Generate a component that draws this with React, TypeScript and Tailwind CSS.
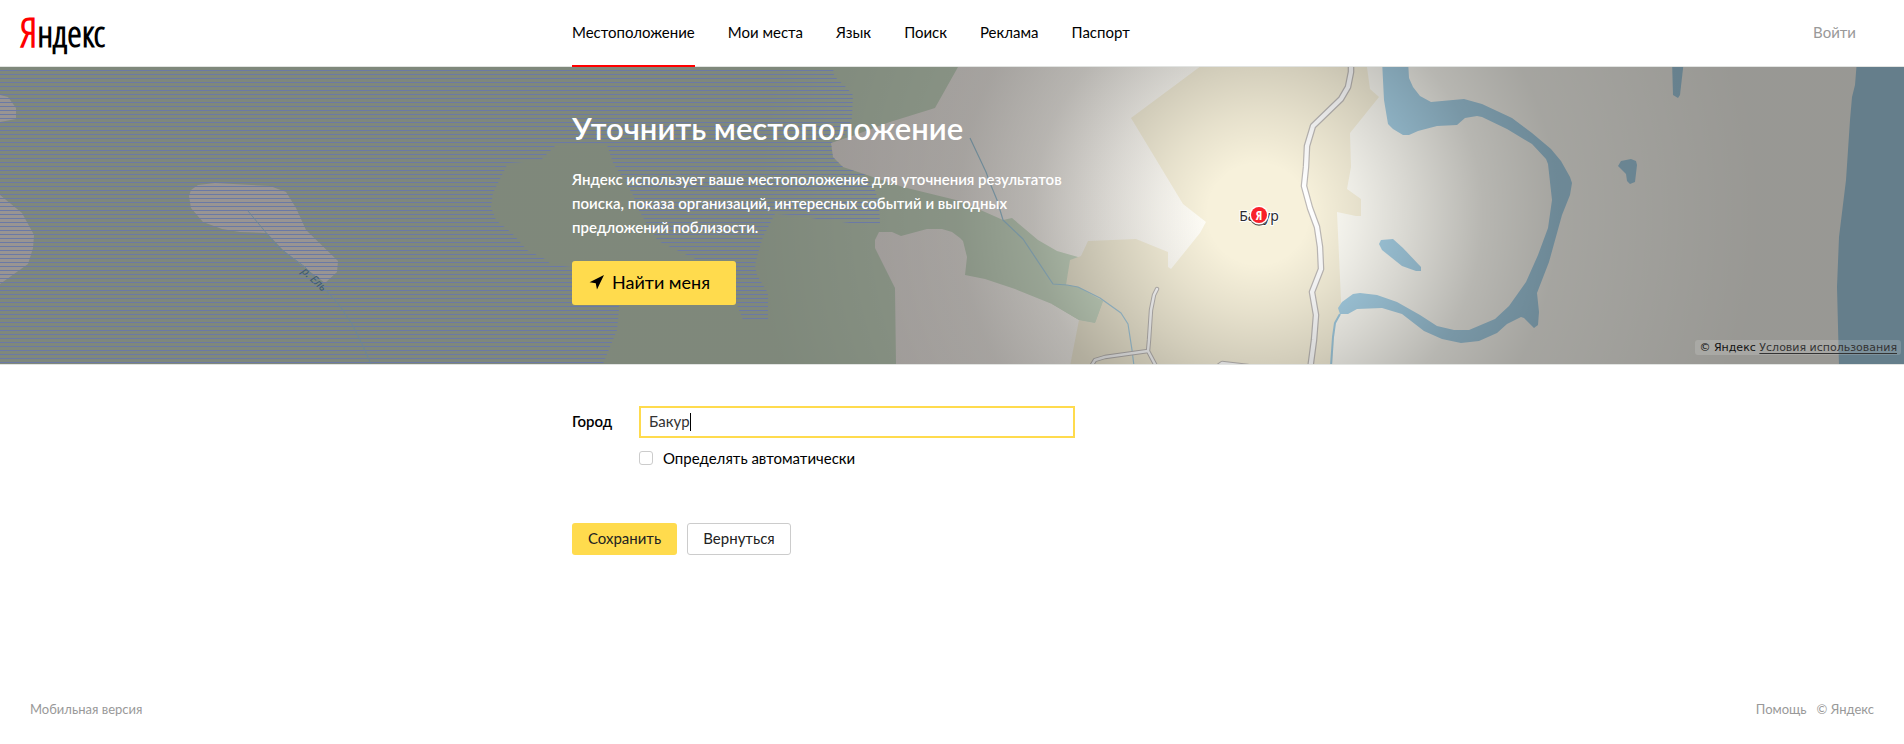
import React from "react";

const NAV = ["Местоположение", "Мои места", "Язык", "Поиск", "Реклама", "Паспорт"];

const MAIN_ROAD =
  "M1351 60 L1351 72 L1348 87 L1341 99 L1313 126 L1307 146 L1306 167 L1304 186 L1310 208 L1317 227 L1320 247 L1321 269 L1312 292 L1316 315 L1314 340 L1310 370";
const SIDE_ROAD = "M1157 289 L1154 295 L1151 310 L1149 340 L1148 351 L1105 357 L1095 360 L1090 368 M1148 351 L1157 368 M1215 368 L1222 363 L1248 366";
const STREAM =
  "M970 138 L986 172 L990 183 L997 200 L1003 220 L1023 239 L1053 284 L1067 285 L1078 287 L1100 298 L1121 313 L1128 324 L1132 350 L1134 366";

function MapView() {
  return (
    <svg
      className="absolute inset-0 h-full w-full"
      viewBox="0 67 1904 297"
      preserveAspectRatio="xMidYMin slice"
      role="img"
      aria-label="Карта: Бакур"
    >
      <defs>
        <pattern id="marsh" width="4" height="4" patternUnits="userSpaceOnUse">
          <rect x="0" y="2" width="4" height="1" fill="#6b79a6" />
        </pattern>
        <radialGradient id="shade" gradientUnits="userSpaceOnUse" cx="1258" cy="214" r="500">
          <stop offset="0" stopColor="#000" stopOpacity="0" />
          <stop offset="0.1" stopColor="#000" stopOpacity="0" />
          <stop offset="0.2" stopColor="#000" stopOpacity="0.07" />
          <stop offset="0.3" stopColor="#000" stopOpacity="0.15" />
          <stop offset="0.45" stopColor="#000" stopOpacity="0.28" />
          <stop offset="0.6" stopColor="#000" stopOpacity="0.35" />
          <stop offset="1" stopColor="#000" stopOpacity="0.4" />
        </radialGradient>
        <linearGradient id="land" gradientUnits="userSpaceOnUse" x1="800" y1="0" x2="1250" y2="0">
          <stop offset="0" stopColor="#fff8f4" />
          <stop offset="1" stopColor="#fefdf6" />
        </linearGradient>
      </defs>

      <rect x="0" y="67" width="1904" height="297" fill="url(#land)" />
      <path
        fill="#d3e3cd"
        d="M0 60 L962 60 L958 67 L935 108 L890 122 L855 135 L831 143 L833 157 L843 167 L903 187 L960 201 L985 212 L1003 220 L1012 218 L1038 240 L1057 251 L1078 257 L1110 300 L1095 323 L1079 320 L1052 304 L1015 289 L985 279 L965 275 L967 257 L963 241 L960 238 L952 232 L942 229 L927 229 L901 236 L892 232 L879 232 L875 240 L875 248 L895 288 L896 364 L0 364 Z"
      />
      <g fill="#fff8f4">
        <path d="M0 95 L8 97 L16 108 L16 119 L0 122 Z" />
        <path d="M0 195 L22 213 L34 235 L33 248 L28 264 L0 284 Z" />
        <path d="M198 185 L215 183 L270 186 L286 192 L296 208 L306 230 L338 261 L337 272 L325 283 L300 264 L283 250 L267 233 L240 232 L222 229 L203 222 L191 208 L189 196 L191 190 Z" />
      </g>
      <path
        fill="#f7f1db"
        d="M1209 60 L1131 118 L1183 204 L1206 222 L1200 233 L1171 269 L1168 267 L1168 252 L1136 239 L1088 241 L1081 256 L1070 260 L1066 285 L1103 301 L1095 323 L1079 320 L1070 366 L1332 366 L1335 323 L1341 310 L1341 300 L1337 212 L1356 216 L1361 216 L1361 199 L1347 189 L1351 167 L1350 133 L1379 97 L1370 89 L1366 60 Z"
      />
      <path
        fill="#d3e3cd"
        d="M1066 285 L1078 287 L1103 301 L1095 323 L1079 320 L1052 304 Z"
      />
      <g fill="#a8d2e7">
        <path d="M1382 60 L1384 100 L1388 124 L1393 129 L1403 135 L1409 135 L1418 131 L1437 126 L1457 125 L1465 118 L1477 116 L1482 117 L1507 129 L1532 144 L1546 159 L1548 164 L1552 200 L1548 228 L1538 255 L1526 282 L1509 306 L1495 319 L1469 330 L1454 330 L1437 326 L1420 315 L1397 302 L1377 295 L1360 293 L1353 294 L1342 302 L1338 308 L1340 314 L1348 314 L1357 309 L1382 308 L1402 314 L1424 331 L1442 339 L1461 343 L1479 341 L1497 333 L1507 324 L1521 317 L1524 318 L1534 328 L1538 325 L1539 312 L1537 293 L1549 262 L1562 215 L1570 195 L1572 183 L1570 177 L1561 161 L1551 149 L1532 133 L1512 118 L1482 104 L1464 99 L1431 102 L1420 96 L1413 87 L1409 78 L1408 60 Z" />
        <path d="M1379 244 L1381 240 L1393 239 L1403 248 L1421 267 L1421 271 L1416 271 L1402 266 L1382 250 Z" />
        <path d="M1672 60 L1673 95 L1678 98 L1680 95 L1684 60 Z" />
        <path d="M1618 166 L1621 161 L1631 159 L1636 161 L1637 165 L1635 182 L1630 184 L1627 181 L1626 174 Z" />
        <path d="M1857 60 L1855 85 L1852 97 L1850 120 L1846 180 L1839 237 L1837 287 L1839 366 L1904 366 L1904 60 Z" />
      </g>
      <g fill="none" strokeLinejoin="round">
        <path d="M1340 314 L1335 323 L1333 337 L1331 366" stroke="#a0cbe0" strokeWidth="2" />
        <path d={STREAM} stroke="#a8cfe2" strokeWidth="1.2" />
        <path d={SIDE_ROAD} stroke="#bdb9b6" strokeWidth="4.4" strokeLinecap="round" />
        <path d={SIDE_ROAD} stroke="#fff" strokeWidth="2.4" strokeLinecap="round" />
        <path d={MAIN_ROAD} stroke="#bdb9b6" strokeWidth="6.6" />
        <path d={MAIN_ROAD} stroke="#fff" strokeWidth="4.2" />
      </g>

      <rect x="0" y="67" width="1904" height="297" fill="url(#shade)" />
      <path
        fill="url(#marsh)"
        d="M0 67 L833 67 L834 76 L847 88 L853 95 L852 118 L845 135 L831 143 L833 157 L843 167 L866 175 L875 190 L879 203 L880 224 L850 223 L817 219 L790 215 L775 214 L763 237 L759 250 L755 265 L757 275 L763 285 L768 293 L768 320 L743 320 L737 305 L733 295 L715 271 L695 259 L658 241 L645 221 L637 207 L633 195 L623 178 L613 163 L607 145 L556 145 L540 161 L508 163 L503 173 L493 193 L491 207 L496 220 L512 233 L527 250 L545 259 L552 265 L572 267 L619 290 L619 310 L617 330 L603 364 L0 364 Z"
      />
      <path d="M248 211 L278 247 L305 267 L323 287 L340 306 L352 324 L362 344 L371 364" fill="none" stroke="#6d8695" strokeWidth="1" />
      <text
        transform="translate(301 272) rotate(43)"
        fill="#3d5a70"
        className="font-['Noto_Sans','Open_Sans',sans-serif] text-[11px] italic"
      >
        р. Ель
      </text>

      <text
        x="1259"
        y="221"
        textAnchor="middle"
        fill="#2c2c33"
        stroke="#fff"
        strokeWidth="2"
        paintOrder="stroke"
        className="font-['Noto_Sans','Open_Sans',sans-serif] text-[14px]"
      >
        Бакур
      </text>
      <circle cx="1259" cy="216.5" r="9.3" fill="#55504c" />
      <circle cx="1259" cy="215" r="9.5" fill="#fff" />
      <circle cx="1259" cy="215" r="8" fill="#f8212b" />
      <text
        x="1259"
        y="220"
        textAnchor="middle"
        fill="#fff"
        className="font-['Open_Sans_Condensed','Roboto_Condensed',sans-serif] text-[13px] font-bold"
      >
        Я
      </text>
    </svg>
  );
}

export default function App() {
  return (
    <div className="flex min-h-screen flex-col bg-white font-['Lato','Noto_Sans',sans-serif] text-[15px] text-black">
      <header className="grid h-[67px] grid-cols-[1fr_760px_1fr] border-b border-[#e2e4e2]">
        <div className="pl-5 pt-[6px]">
          <a
            href="#home"
            className="font-['Open_Sans_Condensed_Light','Roboto_Condensed',sans-serif] text-[37px] font-bold leading-[52px]"
          >
            <span className="text-[40px] text-[#f00]">Я</span>ндекс
          </a>
        </div>
        <nav className="-mb-px flex gap-[33px]">
          {NAV.map((label, i) => (
            <a
              key={label}
              href="#section"
              className={
                i === 0
                  ? "whitespace-nowrap border-b-2 border-[#f00] leading-[65px]"
                  : "whitespace-nowrap leading-[65px]"
              }
            >
              {label}
            </a>
          ))}
        </nav>
        <a href="#login" className="justify-self-end pr-12 leading-[65px] text-[#999]">
          Войти
        </a>
      </header>

      <section className="relative h-[298px] overflow-hidden border-b border-[#e2e4e2]">
        <MapView />
        <div className="relative mx-auto w-[760px] max-w-full pt-10 text-white">
          <h1 className="text-[31px] font-semibold leading-[42px]">Уточнить местоположение</h1>
          <p className="mt-[18px] w-[504px] text-[15px] font-semibold leading-6">
            Яндекс использует ваше местоположение для уточнения результатов поиска, показа организаций, интересных
            событий и выгодных предложений поблизости.
          </p>
          <button
            type="button"
            className="mt-[22px] flex h-11 w-[164px] items-center gap-2 rounded-[3px] bg-[#ffdb4d] pb-[2px] pl-[17px] text-[18px] text-black"
          >
            <svg viewBox="0 0 16 16" className="h-[15px] w-[15px]" fill="#000" aria-hidden="true">
              <path d="M16 0 L0.6 7.6 L7.2 8.7 L8.5 15.4 Z" />
            </svg>
            Найти меня
          </button>
        </div>
        <div className="absolute bottom-[9px] right-[3px] rounded-[3px] bg-white/15 px-1 font-['DejaVu_Sans',sans-serif] text-[11px] leading-[15px] text-[#111]">
          © Яндекс{" "}
          <a href="#terms" className="text-[#333] underline underline-offset-2">
            Условия использования
          </a>
        </div>
      </section>

      <form className="mx-auto w-[760px] max-w-full pt-[41px]" onSubmit={(e) => e.preventDefault()}>
        <div className="flex items-center">
          <label htmlFor="city" className="w-[67px] pb-[2px] text-[15px] font-semibold">
            Город
          </label>
          <div className="relative">
            <input
              id="city"
              type="text"
              defaultValue="Бакур"
              className="h-8 w-[436px] border-2 border-[#ffdb4d] bg-white px-2 pb-[2px] text-[15px] text-[#333] outline-none"
            />
            <span className="pointer-events-none absolute left-[51px] top-[7px] h-[18px] w-px bg-black" />
          </div>
        </div>
        <label className="ml-[67px] mt-[9px] flex w-fit items-center gap-[10px] leading-[22px]">
          <input
            type="checkbox"
            className="h-[14px] w-[14px] appearance-none rounded-[3px] border border-[#ccc] bg-white checked:bg-[#ffdb4d]"
          />
          Определять автоматически
        </label>
        <div className="mt-[54px] flex gap-[10px]">
          <button type="submit" className="h-8 w-[105px] rounded-[3px] bg-[#ffdb4d] pb-[2px] text-[#222]">
            Сохранить
          </button>
          <button type="button" className="h-8 w-[104px] rounded-[3px] border border-[#ccc] bg-white pb-[2px] text-[#222]">
            Вернуться
          </button>
        </div>
      </form>

      <footer className="mt-auto flex justify-between px-[30px] pb-[25px] text-[13px] leading-5 text-[#999]">
        <a href="#mobile">Мобильная версия</a>
        <div className="flex gap-[10px]">
          <a href="#help">Помощь</a>
          <span>© Яндекс</span>
        </div>
      </footer>
    </div>
  );
}
